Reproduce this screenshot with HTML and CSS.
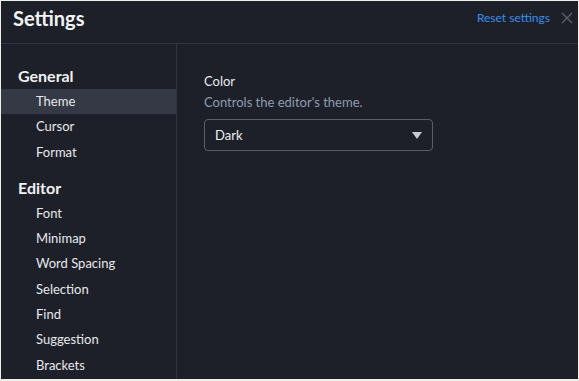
FILE: index.html
```html
<!DOCTYPE html>
<html lang="en">
<head>
    <meta charset="UTF-8">
    <title>Settings</title>
    <link rel="stylesheet" href="styles.css">
</head>
<body>
    <div class="app">
        <div class="header">
            <h1>Settings</h1>
            <div class="actions">
                <a class="reset" href="#">Reset settings</a>
                <svg class="close" width="12" height="12" viewBox="0 0 12 12">
                    <path d="M1 1 L11 11 M11 1 L1 11" stroke="#5c606b" stroke-width="1.4" fill="none"/>
                </svg>
            </div>
        </div>
        <div class="main">
            <div class="sidebar">
                <div class="group">General</div>
                <div class="item active">Theme</div>
                <div class="item">Cursor</div>
                <div class="item">Format</div>
                <div class="group">Editor</div>
                <div class="item">Font</div>
                <div class="item">Minimap</div>
                <div class="item">Word Spacing</div>
                <div class="item">Selection</div>
                <div class="item">Find</div>
                <div class="item">Suggestion</div>
                <div class="item">Brackets</div>
            </div>
            <div class="content">
                <div class="setting">
                    <div class="label">Color</div>
                    <div class="desc">Controls the editor's theme.</div>
                    <div class="select">
                        <span>Dark</span>
                        <span class="arrow"></span>
                    </div>
                </div>
            </div>
        </div>
    </div>
</body>
</html>
```

FILE: styles.css
```css
body {
    margin: 0;
    background-color: #efefe7;
    font-family: Lato, "Open Sans", sans-serif;
}
.app {
    width: 577px;
    height: 378px;
    margin: 1px 0 0 1px;
    background: #1e2029;
    display: flex;
    flex-direction: column;
    overflow: hidden;
}
.header {
    height: 42px;
    border-bottom: 1px solid #31343e;
    display: flex;
    align-items: center;
    justify-content: space-between;
    padding: 0 5px 0 12px;
    flex-shrink: 0;
}
h1 {
    margin: 0 0 9px 0;
    color: #f2f3f5;
    font-size: 20px;
    font-weight: bold;
}
.actions {
    display: flex;
    align-items: center;
    gap: 11px;
    margin-bottom: 9px;
}
.reset {
    color: #3b8de8;
    font-size: 12px;
    text-decoration: none;
}
.main {
    flex: 1;
    display: flex;
}
.sidebar {
    width: 175px;
    border-right: 1px solid #31343e;
    padding-top: 19px;
}
.group {
    color: #eef0f3;
    font-size: 16px;
    font-weight: bold;
    padding-left: 17px;
    height: 26px;
    line-height: 26px;
}
.item + .group {
    margin-top: 10px;
}
.item {
    color: #e6e8ec;
    font-size: 13px;
    padding-left: 35px;
    height: 25.3px;
    line-height: 25.3px;
}
.item.active {
    background: #353945;
}
.content {
    flex: 1;
    padding: 28px 27px;
}
.label {
    color: #e8eaee;
    font-size: 13px;
    line-height: 18px;
}
.desc {
    color: #8e9cb0;
    font-size: 13px;
    line-height: 18px;
    margin-top: 3px;
}
.select {
    width: 207px;
    height: 30px;
    margin-top: 8px;
    border: 1px solid #5b5f6b;
    border-radius: 4px;
    display: flex;
    align-items: center;
    justify-content: space-between;
    padding: 0 10px;
    color: #eef0f3;
    font-size: 13px;
}
.arrow {
    width: 0;
    height: 0;
    border-left: 5px solid transparent;
    border-right: 5px solid transparent;
    border-top: 7px solid #c8cad0;
}
```
